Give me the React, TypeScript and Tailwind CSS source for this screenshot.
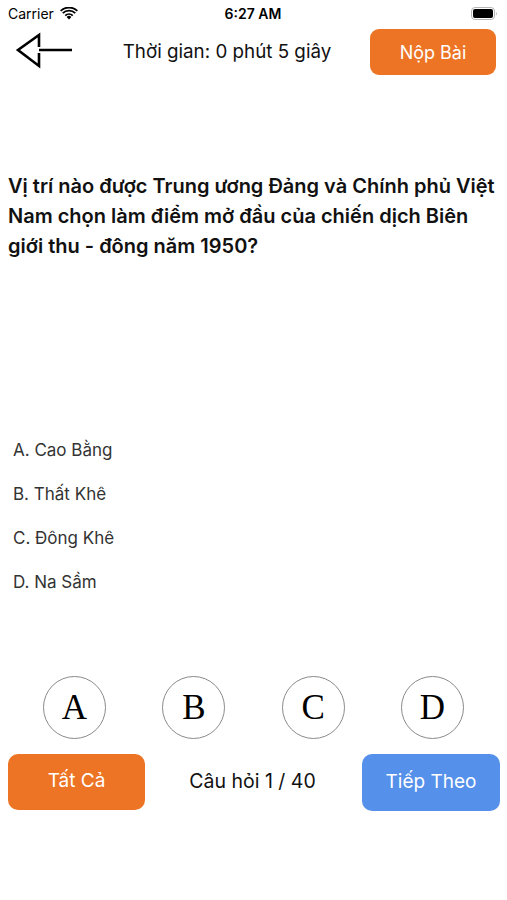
import { useState } from 'react';

const options = ['A. Cao Bằng', 'B. Thất Khê', 'C. Đông Khê', 'D. Na Sầm'];
const letters = ['A', 'B', 'C', 'D'];

export default function App() {
  const [selected, setSelected] = useState<string | null>(null);

  return (
    <div className="w-[507px] h-[900px] bg-white text-black font-['Inter','Liberation_Sans',sans-serif]">
      {/* status bar */}
      <div className="h-[26px] flex items-center justify-between pl-[8px] pr-[9px] text-[14px]">
        <div className="flex items-center gap-[6px] w-[120px]">
          <span>Carrier</span>
          <svg width="18" height="13" viewBox="0 0 18 13">
            <path d="M9 12.5 L6.6 10 A3.4 3.4 0 0 1 11.4 10 Z" fill="black" />
            <path d="M4.6 8 A6.3 6.3 0 0 1 13.4 8 L12.1 9.3 A4.5 4.5 0 0 0 5.9 9.3 Z" fill="black" />
            <path d="M2.1 5.5 A9.8 9.8 0 0 1 15.9 5.5 L14.6 6.8 A8 8 0 0 0 3.4 6.8 Z" fill="black" />
            <path d="M0 3.3 A12.8 12.8 0 0 1 18 3.3 L16.7 4.6 A11 11 0 0 0 1.3 4.6 Z" fill="black" />
          </svg>
        </div>
        <span className="font-semibold">6:27 AM</span>
        <div className="w-[120px] flex justify-end">
          <svg width="27" height="13" viewBox="0 0 27 13">
            <rect x="0.5" y="0.5" width="23" height="12" rx="3.5" fill="none" stroke="#b5b5b5" />
            <rect x="2" y="2" width="20" height="9" rx="2" fill="black" />
            <path d="M25 4.5 Q26.5 6.5 25 8.5 Z" fill="#b5b5b5" />
          </svg>
        </div>
      </div>

      {/* header */}
      <div className="h-[52px] flex items-center">
        <button className="w-[72px] h-[46px] flex items-center">
          <svg width="72" height="46" viewBox="0 0 72 46">
            <path d="M39 18 V6 L18 21 L39 37 V24" fill="none" stroke="black" strokeWidth="2.6" strokeLinejoin="miter" />
            <path d="M39 21 H72" stroke="black" strokeWidth="2.6" />
          </svg>
        </button>
        <div className="flex-1 text-center text-[18.8px] text-[#111] pl-[12px]">Thời gian: 0 phút 5 giây</div>
        <button className="w-[126px] h-[46px] mr-[11px] rounded-[9px] bg-[#ec7424] text-white text-[18px]">Nộp Bài</button>
      </div>

      {/* question */}
      <div className="mt-[93px] px-[8px] text-[20px] leading-[30px] font-semibold text-[#111]">
        Vị trí nào được Trung ương Đảng và Chính phủ Việt Nam chọn làm điểm mở đầu của chiến dịch Biên giới thu - đông năm 1950?
      </div>

      {/* options */}
      <div className="mt-[168px] pl-[13px] flex flex-col">
        {options.map((o) => (
          <div key={o} className="h-[44px] flex items-center text-[17px] text-[#333]">
            {o}
          </div>
        ))}
      </div>

      {/* answer circles */}
      <div className="mt-[71px] px-[43px] flex justify-between">
        {letters.map((l) => (
          <button
            key={l}
            onClick={() => setSelected(l)}
            className={`w-[63px] h-[63px] rounded-full border border-[#8a8a8a] flex items-center justify-center font-['Liberation_Serif',serif] text-[35px] leading-none ${
              selected === l ? 'bg-[#eef4ff]' : 'bg-white'
            }`}
          >
            {l}
          </button>
        ))}
      </div>

      {/* bottom bar */}
      <div className="mt-[13px] px-[8px] flex items-center justify-between">
        <button className="w-[137px] h-[56px] rounded-[10px] bg-[#ec7424] text-white text-[19px]">Tất Cả</button>
        <span className="text-[19.5px] text-[#111] pr-[2px]">Câu hỏi 1 / 40</span>
        <button className="w-[138px] h-[57px] mt-[2px] mr-[-1px] rounded-[10px] bg-[#5590ea] text-white text-[19px]">Tiếp Theo</button>
      </div>
    </div>
  );
}
